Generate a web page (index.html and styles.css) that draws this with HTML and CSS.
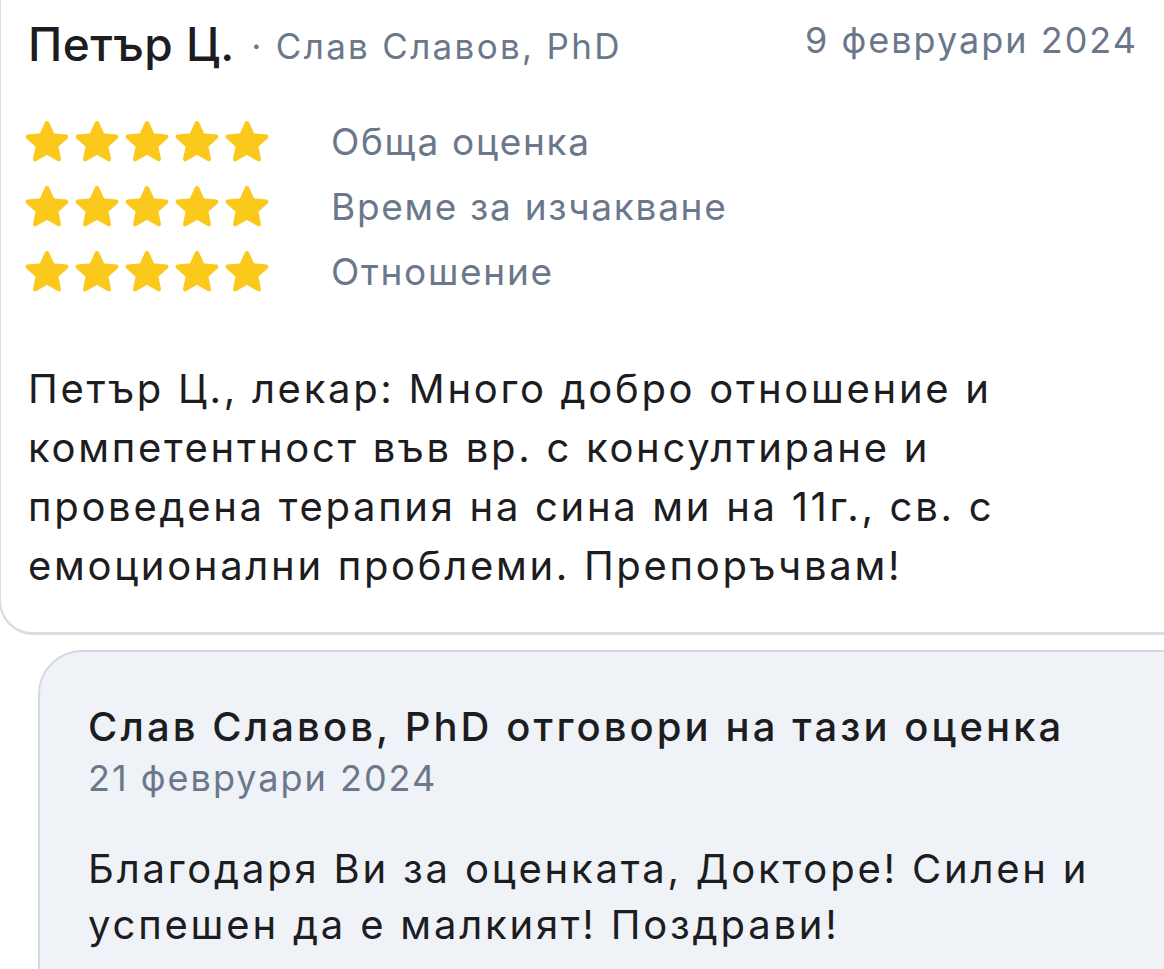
FILE: index.html
```html
<!DOCTYPE html>
<html lang="bg">
  <head>
    <meta charset="UTF-8" />
    <meta name="viewport" content="width=device-width, initial-scale=1.0" />
    <title>Оценка</title>
    <link rel="stylesheet" href="styles.css">
  </head>
  <body>
    <div class="review">
      <div class="review-head">
        <div class="author">
          <span class="author-name">Петър Ц.</span>
          <span class="author-doc">· Слав Славов, PhD</span>
        </div>
        <div class="review-date">9 февруари 2024</div>
      </div>

      <div class="ratings">
        <div class="rating-row">
          <div class="stars">
            <svg viewBox="0 0 24 24"><path d="M12 2.6L14.8 8.7 21.6 9.4 16.5 13.9 17.9 20.6 12 17.2 6.1 20.6 7.5 13.9 2.4 9.4 9.2 8.7Z"/></svg>
            <svg viewBox="0 0 24 24"><path d="M12 2.6L14.8 8.7 21.6 9.4 16.5 13.9 17.9 20.6 12 17.2 6.1 20.6 7.5 13.9 2.4 9.4 9.2 8.7Z"/></svg>
            <svg viewBox="0 0 24 24"><path d="M12 2.6L14.8 8.7 21.6 9.4 16.5 13.9 17.9 20.6 12 17.2 6.1 20.6 7.5 13.9 2.4 9.4 9.2 8.7Z"/></svg>
            <svg viewBox="0 0 24 24"><path d="M12 2.6L14.8 8.7 21.6 9.4 16.5 13.9 17.9 20.6 12 17.2 6.1 20.6 7.5 13.9 2.4 9.4 9.2 8.7Z"/></svg>
            <svg viewBox="0 0 24 24"><path d="M12 2.6L14.8 8.7 21.6 9.4 16.5 13.9 17.9 20.6 12 17.2 6.1 20.6 7.5 13.9 2.4 9.4 9.2 8.7Z"/></svg>
          </div>
          <span class="rating-label">Обща оценка</span>
        </div>
        <div class="rating-row">
          <div class="stars">
            <svg viewBox="0 0 24 24"><path d="M12 2.6L14.8 8.7 21.6 9.4 16.5 13.9 17.9 20.6 12 17.2 6.1 20.6 7.5 13.9 2.4 9.4 9.2 8.7Z"/></svg>
            <svg viewBox="0 0 24 24"><path d="M12 2.6L14.8 8.7 21.6 9.4 16.5 13.9 17.9 20.6 12 17.2 6.1 20.6 7.5 13.9 2.4 9.4 9.2 8.7Z"/></svg>
            <svg viewBox="0 0 24 24"><path d="M12 2.6L14.8 8.7 21.6 9.4 16.5 13.9 17.9 20.6 12 17.2 6.1 20.6 7.5 13.9 2.4 9.4 9.2 8.7Z"/></svg>
            <svg viewBox="0 0 24 24"><path d="M12 2.6L14.8 8.7 21.6 9.4 16.5 13.9 17.9 20.6 12 17.2 6.1 20.6 7.5 13.9 2.4 9.4 9.2 8.7Z"/></svg>
            <svg viewBox="0 0 24 24"><path d="M12 2.6L14.8 8.7 21.6 9.4 16.5 13.9 17.9 20.6 12 17.2 6.1 20.6 7.5 13.9 2.4 9.4 9.2 8.7Z"/></svg>
          </div>
          <span class="rating-label">Време за изчакване</span>
        </div>
        <div class="rating-row">
          <div class="stars">
            <svg viewBox="0 0 24 24"><path d="M12 2.6L14.8 8.7 21.6 9.4 16.5 13.9 17.9 20.6 12 17.2 6.1 20.6 7.5 13.9 2.4 9.4 9.2 8.7Z"/></svg>
            <svg viewBox="0 0 24 24"><path d="M12 2.6L14.8 8.7 21.6 9.4 16.5 13.9 17.9 20.6 12 17.2 6.1 20.6 7.5 13.9 2.4 9.4 9.2 8.7Z"/></svg>
            <svg viewBox="0 0 24 24"><path d="M12 2.6L14.8 8.7 21.6 9.4 16.5 13.9 17.9 20.6 12 17.2 6.1 20.6 7.5 13.9 2.4 9.4 9.2 8.7Z"/></svg>
            <svg viewBox="0 0 24 24"><path d="M12 2.6L14.8 8.7 21.6 9.4 16.5 13.9 17.9 20.6 12 17.2 6.1 20.6 7.5 13.9 2.4 9.4 9.2 8.7Z"/></svg>
            <svg viewBox="0 0 24 24"><path d="M12 2.6L14.8 8.7 21.6 9.4 16.5 13.9 17.9 20.6 12 17.2 6.1 20.6 7.5 13.9 2.4 9.4 9.2 8.7Z"/></svg>
          </div>
          <span class="rating-label">Отношение</span>
        </div>
      </div>

      <p class="review-text">Петър Ц., лекар: Много добро отношение и<br>компетентност във вр. с консултиране и<br>проведена терапия на сина ми на 11г., св. с<br>емоционални проблеми. Препоръчвам!</p>
    </div>

    <div class="reply">
      <div class="reply-title">Слав Славов, PhD отговори на тази оценка</div>
      <div class="reply-date">21 февруари 2024</div>
      <p class="reply-text">Благодаря Ви за оценката, Докторе! Силен и<br>успешен да е малкият! Поздрави!</p>
    </div>
  </body>
</html>
```

FILE: styles.css
```css
:root {
  --text: #1d1d1f;
  --muted: #6b778a;
  --star: #fbc81c;
  --line: #dcdcde;
  --reply-bg: #eff2f7;
  --reply-line: #d4d8de;
}

body {
  font-family: Inter, 'Noto Sans', sans-serif;
  margin: 0;
  background-color: white;
  color: var(--text);
  overflow: hidden;
}

.review {
  margin-left: -1px;
  margin-right: -40px;
  padding: 14px 66px 37px 27px;
  border-left: 2px solid var(--line);
  border-bottom: 3px solid var(--line);
  border-bottom-left-radius: 34px;
}

.review-head {
  display: flex;
  justify-content: space-between;
  align-items: flex-start;
}

.author {
  line-height: 60px;
  white-space: nowrap;
}

.author-name {
  font-size: 46px;
  font-weight: 500;
  letter-spacing: 0.5px;
}

.author-doc {
  font-size: 35px;
  color: var(--muted);
  margin-left: 12px;
  letter-spacing: 2.3px;
  vertical-align: 2px;
}

.review-date {
  font-size: 36px;
  line-height: 60px;
  margin-top: -4px;
  color: var(--muted);
  letter-spacing: 2px;
}

.ratings {
  margin-top: 24px;
}

.rating-row {
  display: flex;
  align-items: center;
  height: 65px;
}

.stars {
  display: flex;
  gap: 2px;
  width: 308px;
  margin-left: -5px;
}

.stars svg {
  width: 48px;
  height: 48px;
  fill: var(--star);
  stroke: var(--star);
  stroke-width: 2.2;
  stroke-linejoin: round;
}

.rating-label {
  font-size: 37px;
  color: var(--muted);
  letter-spacing: 1.7px;
}

.review-text {
  margin: 55px 0 0;
  font-size: 40px;
  line-height: 59px;
  letter-spacing: 2.7px;
  white-space: nowrap;
}

.reply {
  margin: 15px -60px 0 38px;
  padding: 47px 100px 40px 48px;
  background-color: var(--reply-bg);
  border: 2px solid var(--reply-line);
  border-top-left-radius: 44px;
}

.reply-title {
  font-size: 40px;
  font-weight: 500;
  line-height: 56px;
  letter-spacing: 3.1px;
  white-space: nowrap;
}

.reply-date {
  font-size: 36px;
  color: var(--muted);
  line-height: 46px;
  letter-spacing: 2px;
}

.reply-text {
  margin: 40px 0 0;
  font-size: 40px;
  line-height: 56px;
  letter-spacing: 2.8px;
  white-space: nowrap;
}
```
